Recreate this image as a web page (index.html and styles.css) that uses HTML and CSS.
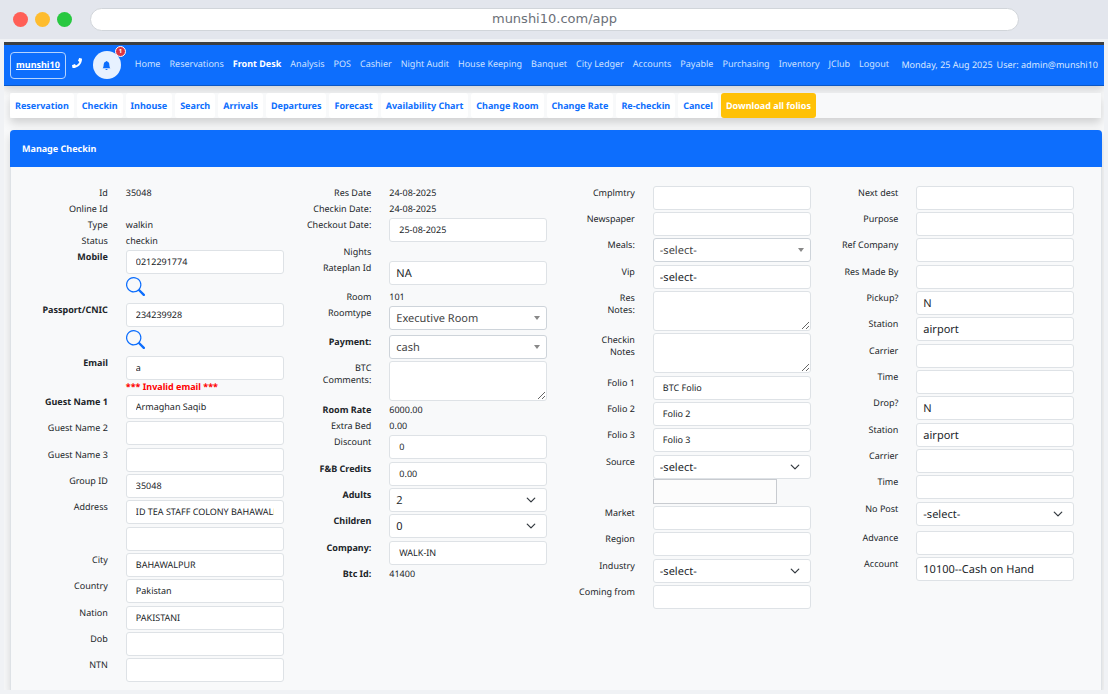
FILE: index.html
```html
<!DOCTYPE html>
<html lang="en">
<head>
<meta charset="utf-8">
<title>Manage Checkin</title>
<link rel="stylesheet" href="styles.css">
</head>
<body>
<header class="chrome">
  <div class="lights"><span class="light red"></span><span class="light amber"></span><span class="light green"></span></div>
  <div class="address">munshi10.com/app</div>
</header>
<div class="page">
  <nav class="topnav">
    <a class="brand" href="#">munshi10</a>
    <a class="phone" href="#" aria-label="Call"><svg viewBox="0 0 512 512"><path fill="#fff" d="M493.4 24.6l-104-24c-11.300-2.600-22.900 3.300-27.500 13.900l-48 112c-4.200 9.800-1.400 21.300 6.900 28l60.600 49.600c-36 76.700-98.900 140.500-177.200 177.200l-49.600-60.600c-6.800-8.300-18.200-11.100-28-6.900l-112 48C3.900 366.500-2 378.100.6 389.400l24 104C27.100 504.200 36.700 512 48 512c256.100 0 464-207.500 464-464 0-11.200-7.700-20.900-18.600-23.400z"/></svg></a>
    <button class="bell" type="button" aria-label="Notifications">
      <svg viewBox="0 0 16 16"><path fill="#0d6efd" d="M8 16a2 2 0 0 0 2-2H6a2 2 0 0 0 2 2m.995-14.901a1 1 0 1 0-1.990 0A5 5 0 0 0 3 6c0 1.098-.5 6-2 7h14c-1.500-1-2-5.902-2-7 0-2.420-1.720-4.440-4.005-4.901"/></svg>
      <span class="badge">1</span>
    </button>
    <div class="links">
      <a href="#">Home</a><a href="#">Reservations</a><a class="active" href="#">Front Desk</a><a href="#">Analysis</a><a href="#">POS</a><a href="#">Cashier</a><a href="#">Night Audit</a><a href="#">House Keeping</a><a href="#">Banquet</a><a href="#">City Ledger</a><a href="#">Accounts</a><a href="#">Payable</a><a href="#">Purchasing</a><a href="#">Inventory</a><a href="#">JClub</a><a href="#">Logout</a>
    </div>
    <div class="session"><span>Monday, 25 Aug 2025</span><span>User: admin@munshi10</span></div>
  </nav>
  <nav class="subnav">
    <a href="#">Reservation</a><a href="#">Checkin</a><a href="#">Inhouse</a><a href="#">Search</a><a href="#">Arrivals</a><a href="#">Departures</a><a href="#">Forecast</a><a href="#">Availability Chart</a><a href="#">Change Room</a><a href="#">Change Rate</a><a href="#">Re-checkin</a><a href="#">Cancel</a><a class="download" href="#">Download all folios</a>
  </nav>
  <main class="card">
    <h1 class="card-title">Manage Checkin</h1>
    <form class="columns">
      <div class="column">
        <div class="row"><span class="label">Id</span><span class="text">35048</span></div>
        <div class="row"><span class="label">Online Id</span></div>
        <div class="row"><span class="label">Type</span><span class="text">walkin</span></div>
        <div class="row"><span class="label">Status</span><span class="text">checkin</span></div>
        <div class="row lookup"><label class="label strong" for="mobile">Mobile</label><div class="control"><input class="box" id="mobile" value="0212291774"><button class="search" type="button" aria-label="Search mobile"><svg viewBox="0 0 16 16"><path fill="#0d6efd" d="M11.742 10.344a6.500 6.500 0 1 0-1.397 1.398h-.001q.044.060.098.115l3.850 3.850a1 1 0 0 0 1.415-1.414l-3.850-3.850a1 1 0 0 0-.115-.1zM12 6.500a5.500 5.500 0 1 1-11 0 5.500 5.500 0 0 1 11 0"/></svg></button></div></div>
        <div class="row lookup"><label class="label strong" for="passport">Passport/CNIC</label><div class="control"><input class="box" id="passport" value="234239928"><button class="search" type="button" aria-label="Search passport"><svg viewBox="0 0 16 16"><path fill="#0d6efd" d="M11.742 10.344a6.500 6.500 0 1 0-1.397 1.398h-.001q.044.060.098.115l3.850 3.850a1 1 0 0 0 1.415-1.414l-3.850-3.850a1 1 0 0 0-.115-.1zM12 6.500a5.500 5.500 0 1 1-11 0 5.500 5.500 0 0 1 11 0"/></svg></button></div></div>
        <div class="row"><label class="label strong" for="email">Email</label><div class="control"><input class="box" id="email" value="a"><span class="error">*** Invalid email ***</span></div></div>
        <div class="row field"><label class="label strong" for="g1">Guest Name 1</label><div class="control"><input class="box" id="g1" value="Armaghan Saqib"></div></div>
        <div class="row field"><label class="label" for="g2">Guest Name 2</label><div class="control"><input class="box" id="g2"></div></div>
        <div class="row field"><label class="label" for="g3">Guest Name 3</label><div class="control"><input class="box" id="g3"></div></div>
        <div class="row field"><label class="label" for="group">Group ID</label><div class="control"><input class="box" id="group" value="35048"></div></div>
        <div class="row field"><label class="label" for="addr">Address</label><div class="control"><input class="box" id="addr" value="ID TEA STAFF COLONY BAHAWALPUR"></div></div>
        <div class="row field"><span class="label"></span><div class="control"><input class="box" aria-label="Address line 2"></div></div>
        <div class="row field"><label class="label" for="city">City</label><div class="control"><input class="box" id="city" value="BAHAWALPUR"></div></div>
        <div class="row field"><label class="label" for="country">Country</label><div class="control"><input class="box" id="country" value="Pakistan"></div></div>
        <div class="row field"><label class="label" for="nation">Nation</label><div class="control"><input class="box" id="nation" value="PAKISTANI"></div></div>
        <div class="row field"><label class="label" for="dob">Dob</label><div class="control"><input class="box" id="dob"></div></div>
        <div class="row field"><label class="label" for="ntn">NTN</label><div class="control"><input class="box" id="ntn"></div></div>
      </div>
      <div class="column">
        <div class="row"><span class="label">Res Date</span><span class="text">24-08-2025</span></div>
        <div class="row"><span class="label">Checkin Date:</span><span class="text">24-08-2025</span></div>
        <div class="row field"><label class="label" for="out">Checkout Date:</label><div class="control"><input class="box" id="out" value="25-08-2025"></div></div>
        <div class="row"><span class="label">Nights</span></div>
        <div class="row field spaced"><label class="label" for="plan">Rateplan Id</label><div class="control"><select class="box large" id="plan"><option>NA</option></select></div></div>
        <div class="row"><span class="label">Room</span><span class="text">101</span></div>
        <div class="row field spaced"><label class="label" for="rtype">Roomtype</label><div class="control"><select class="box large caret" id="rtype"><option>Executive Room</option></select></div></div>
        <div class="row field"><label class="label strong" for="pay">Payment:</label><div class="control"><select class="box large caret" id="pay"><option>cash</option></select></div></div>
        <div class="row notes"><label class="label" for="btc">BTC<br>Comments:</label><div class="control"><textarea class="box area" id="btc"></textarea></div></div>
        <div class="row"><span class="label strong">Room Rate</span><span class="text">6000.00</span></div>
        <div class="row"><span class="label">Extra Bed</span><span class="text">0.00</span></div>
        <div class="row field"><label class="label" for="disc">Discount</label><div class="control"><input class="box" id="disc" value="0"></div></div>
        <div class="row field"><label class="label strong" for="fb">F&amp;B Credits</label><div class="control"><input class="box" id="fb" value="0.00"></div></div>
        <div class="row field"><label class="label strong" for="adults">Adults</label><div class="control"><select class="box large chevron" id="adults"><option>2</option></select></div></div>
        <div class="row field"><label class="label strong" for="kids">Children</label><div class="control"><select class="box large chevron" id="kids"><option>0</option></select></div></div>
        <div class="row field"><label class="label strong" for="company">Company:</label><div class="control"><input class="box" id="company" value="WALK-IN"></div></div>
        <div class="row"><span class="label strong">Btc Id:</span><span class="text">41400</span></div>
      </div>
      <div class="column">
        <div class="row field"><label class="label" for="comp">Cmplmtry</label><div class="control"><input class="box" id="comp"></div></div>
        <div class="row field"><label class="label" for="news">Newspaper</label><div class="control"><input class="box" id="news"></div></div>
        <div class="row field"><label class="label" for="meals">Meals:</label><div class="control"><select class="box large caret" id="meals"><option>-select-</option></select></div></div>
        <div class="row field"><label class="label" for="vip">Vip</label><div class="control"><select class="box large" id="vip"><option>-select-</option></select></div></div>
        <div class="row notes"><label class="label" for="rnotes">Res<br>Notes:</label><div class="control"><textarea class="box area" id="rnotes"></textarea></div></div>
        <div class="row notes"><label class="label" for="cnotes">Checkin<br>Notes</label><div class="control"><textarea class="box area" id="cnotes"></textarea></div></div>
        <div class="row field"><label class="label" for="f1">Folio 1</label><div class="control"><input class="box" id="f1" value="BTC Folio"></div></div>
        <div class="row field"><label class="label" for="f2">Folio 2</label><div class="control"><input class="box" id="f2" value="Folio 2"></div></div>
        <div class="row field"><label class="label" for="f3">Folio 3</label><div class="control"><input class="box" id="f3" value="Folio 3"></div></div>
        <div class="row"><label class="label" for="source">Source</label><div class="control"><select class="box large chevron" id="source"><option>-select-</option></select><input class="extra" aria-label="Source detail"></div></div>
        <div class="row field"><label class="label" for="market">Market</label><div class="control"><input class="box" id="market"></div></div>
        <div class="row field"><label class="label" for="region">Region</label><div class="control"><input class="box" id="region"></div></div>
        <div class="row field"><label class="label" for="industry">Industry</label><div class="control"><select class="box large chevron" id="industry"><option>-select-</option></select></div></div>
        <div class="row field"><label class="label" for="from">Coming from</label><div class="control"><input class="box" id="from"></div></div>
      </div>
      <div class="column">
        <div class="row field"><label class="label" for="next">Next dest</label><div class="control"><input class="box" id="next"></div></div>
        <div class="row field"><label class="label" for="purpose">Purpose</label><div class="control"><input class="box" id="purpose"></div></div>
        <div class="row field"><label class="label" for="ref">Ref Company</label><div class="control"><input class="box" id="ref"></div></div>
        <div class="row field"><label class="label" for="made">Res Made By</label><div class="control"><input class="box" id="made"></div></div>
        <div class="row field"><label class="label" for="pickup">Pickup?</label><div class="control"><select class="box large" id="pickup"><option>N</option></select></div></div>
        <div class="row field"><label class="label" for="st1">Station</label><div class="control"><select class="box large" id="st1"><option>airport</option></select></div></div>
        <div class="row field"><label class="label" for="ca1">Carrier</label><div class="control"><input class="box" id="ca1"></div></div>
        <div class="row field"><label class="label" for="ti1">Time</label><div class="control"><input class="box" id="ti1"></div></div>
        <div class="row field"><label class="label" for="drop">Drop?</label><div class="control"><select class="box large" id="drop"><option>N</option></select></div></div>
        <div class="row field"><label class="label" for="st2">Station</label><div class="control"><select class="box large" id="st2"><option>airport</option></select></div></div>
        <div class="row field"><label class="label" for="ca2">Carrier</label><div class="control"><input class="box" id="ca2"></div></div>
        <div class="row field"><label class="label" for="ti2">Time</label><div class="control"><input class="box" id="ti2"></div></div>
        <div class="row field spaced"><label class="label" for="nopost">No Post</label><div class="control"><select class="box large chevron" id="nopost"><option>-select-</option></select></div></div>
        <div class="row field"><label class="label" for="advance">Advance</label><div class="control"><input class="box" id="advance"></div></div>
        <div class="row field"><label class="label" for="account">Account</label><div class="control"><select class="box large" id="account"><option>10100--Cash on Hand</option></select></div></div>
      </div>
    </form>
  </main>
</div>
</body>
</html>
```
FILE: styles.css
```css
* { box-sizing: border-box; }
body {
  margin: 0;
  min-height: 100vh;
  display: flex;
  flex-direction: column;
  background: #f0f2f5;
  color: #212529;
  font-family: "Noto Sans", sans-serif;
  font-size: 9px;
}
a { text-decoration: none; color: inherit; }

.chrome {
  display: grid;
  grid-template-columns: 78px 1fr 78px;
  align-items: center;
  height: 39px;
  padding: 0 11px 0 12px;
  background: #e3e6ed;
}
.lights { display: flex; gap: 7px; padding-left: 1px; }
.light { width: 15px; height: 15px; border-radius: 50%; }
.red { background: #ff5f57; }
.amber { background: #febc2e; }
.green { background: #28c840; }
.address {
  height: 23px;
  border: 1px solid #d1d5da;
  border-radius: 12px;
  background: #fff;
  color: #6b7078;
  text-align: center;
  font: 13px/20px "DejaVu Sans", sans-serif;
}

.page {
  flex: 1;
  display: flex;
  flex-direction: column;
  margin: 3px 4px 4px;
  overflow: hidden;
  background: #f8f9fa;
  border-top: 3px solid #3c3f41;
  text-rendering: geometricPrecision;
}
.topnav {
  display: flex;
  align-items: center;
  height: 41px;
  padding: 0 6px;
  background: #0d6efd;
  border-bottom: 1px solid #0b57c4;
  box-shadow: 0 4px 8px rgba(0, 0, 0, .15);
  color: #fff;
}
.brand {
  height: 27px;
  padding: 0 5px;
  border: 1px solid #b6d4fe;
  border-radius: 4px;
  line-height: 24px;
  font-weight: 700;
  text-decoration: underline;
}
.phone { margin-left: 6px; padding-bottom: 4px; }
.phone svg { display: block; width: 10px; height: 10px; }
.bell {
  position: relative;
  flex: none;
  display: grid;
  place-items: center;
  width: 28px;
  height: 28px;
  margin-left: 11px;
  padding: 0;
  border: 0;
  border-radius: 50%;
  background: #e7f1ff;
}
.bell svg { width: 9px; height: 9px; }
.badge {
  position: absolute;
  top: -5px;
  right: -5px;
  width: 11px;
  height: 11px;
  border: 1px solid #fff;
  border-radius: 50%;
  background: #dc3545;
  color: #fff;
  font: 700 6px/9px "Noto Sans", sans-serif;
  text-align: center;
}
.links { display: flex; gap: 9px; margin-left: 14px; padding-bottom: 4px; color: #cfe2ff; white-space: nowrap; }
.links .active { color: #fff; font-weight: 700; }
.session { display: flex; gap: 4px; margin-left: auto; padding-bottom: 1px; color: #dbe9ff; white-space: nowrap; }

.subnav {
  display: flex;
  gap: 3px;
  margin: 7px 3px 0 6px;
  background: #f8f9fa;
  box-shadow: 0 5px 10px rgba(0, 0, 0, .16);
  color: #0d6efd;
  font-weight: 700;
  white-space: nowrap;
}
.subnav a { padding: 0 5px; border-radius: 3px; background: #fff; line-height: 25px; }
.subnav .download { background: #ffc107; color: #fff; }

.card {
  flex: 1;
  margin: 12px 2px 0 6px;
  border: solid #dee2e6;
  border-width: 0 1px;
  border-radius: 4px 4px 0 0;
  background: #f8f9fa;
  box-shadow: 0 5px 10px rgba(0, 0, 0, .15);
}
.card-title {
  margin: 0 -1px;
  padding: 0 12px;
  border-radius: 4px 4px 0 0;
  background: #0d6efd;
  color: #fff;
  font-size: 9px;
  line-height: 37px;
}
.columns { display: grid; grid-template-columns: repeat(4, 1fr); padding: 17px 18px 6px; }
.column { display: flex; flex-direction: column; }
.row { display: grid; grid-template-columns: 1fr 2fr; min-height: 16px; }
.field { min-height: 26px; }
.field:nth-child(3n) { min-height: 27px; }
.spaced { min-height: 29px; }
.lookup { min-height: 53px; }
.notes:nth-child(6n) { min-height: 43px; }
.label { padding: 3px 9px 1px; text-align: right; line-height: 12px; }
.strong { font-weight: 700; }
.text { padding: 3px 9px 1px; line-height: 12px; }
.control { min-width: 0; padding: 2px 9px 0; }
.box {
  display: block;
  width: 100%;
  height: 24px;
  margin: 0;
  padding: 0 9px 1px;
  border: 1px solid #dee2e6;
  border-radius: 3px;
  background: #fff;
  color: #212529;
  font: 9px "Noto Sans", sans-serif;
  text-rendering: geometricPrecision;
}
.large { padding: 1px 6px 0; font-size: 11px; appearance: none; }
.caret {
  border-color: #ced4da;
  color: #444;
  background: #fff url("data:image/svg+xml,%3Csvg xmlns='http://www.w3.org/2000/svg' viewBox='0 0 6 4'%3E%3Cpath fill='%23888' d='M0 0h6L3 4z'/%3E%3C/svg%3E") no-repeat right 6px center / 6px 4px;
}
.chevron {
  background: #fff url("data:image/svg+xml,%3Csvg xmlns='http://www.w3.org/2000/svg' viewBox='0 0 16 16'%3E%3Cpath fill='none' stroke='%23343a40' stroke-linecap='round' stroke-linejoin='round' stroke-width='2' d='m2 5 6 6 6-6'/%3E%3C/svg%3E") no-repeat right 10px center / 10px 10px;
}
.area { height: 40px; resize: vertical; }
.error { display: block; color: #f00; font-weight: 700; line-height: 13px; }
.search { display: block; margin: 3px 0 0; padding: 0; border: 0; background: none; }
.search svg { display: block; width: 19px; height: 19px; }
.extra {
  display: block;
  width: 79%;
  height: 25px;
  margin: 0;
  border: 1px solid #c8cbd0;
  background: #fcfcfc;
}
```
